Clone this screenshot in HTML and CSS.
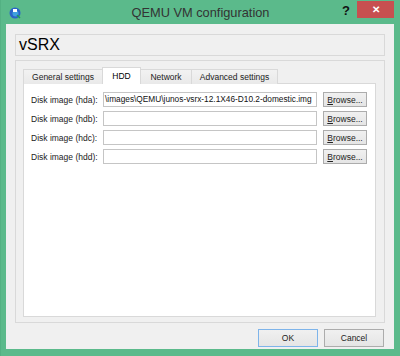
FILE: index.html
```html
<!DOCTYPE html>
<html>
<head>
<meta charset="utf-8">
<link rel="stylesheet" href="styles.css">
</head>
<body>
<div class="window">
  <div class="titlebar">
    <svg class="appicon" width="12" height="12" viewBox="0 0 12 12">
      <circle cx="6" cy="6" r="5.5" fill="#2b64c8"/>
      <circle cx="6.5" cy="6.5" r="3" fill="#3fa0e0"/>
      <rect x="4" y="2" width="4" height="3" fill="#ffffff"/>
      <path d="M8 8 L11 11" stroke="#1d9a5a" stroke-width="1.5"/>
    </svg>
    <div class="title">QEMU VM configuration</div>
    <div class="help">?</div>
    <div class="close">✕</div>
  </div>
  <div class="client">
    <div class="namebox">vSRX</div>
    <div class="group">
      <div class="tabs">
        <div class="tab t1">General settings</div>
        <div class="tab t2 active">HDD</div>
        <div class="tab t3">Network</div>
        <div class="tab t4">Advanced settings</div>
      </div>
      <div class="pane">
        <div class="row">
          <div class="label">Disk image (hda):</div>
          <div class="input filled">\images\QEMU\junos-vsrx-12.1X46-D10.2-domestic.img</div>
          <div class="btn browse"><u>B</u>rowse...</div>
        </div>
        <div class="row">
          <div class="label">Disk image (hdb):</div>
          <div class="input"></div>
          <div class="btn browse"><u>B</u>rowse...</div>
        </div>
        <div class="row">
          <div class="label">Disk image (hdc):</div>
          <div class="input"></div>
          <div class="btn browse"><u>B</u>rowse...</div>
        </div>
        <div class="row">
          <div class="label">Disk image (hdd):</div>
          <div class="input"></div>
          <div class="btn browse"><u>B</u>rowse...</div>
        </div>
      </div>
    </div>
    <div class="footer">
      <div class="btn big default">OK</div>
      <div class="btn big">Cancel</div>
    </div>
  </div>
</div>
</body>
</html>
```
FILE: styles.css
```css
html, body {
  margin: 0;
  padding: 0;
}
body {
  width: 400px;
  height: 356px;
  background: #5bba8b;
  font-family: "Liberation Sans", Arial, sans-serif;
  overflow: hidden;
}
.window {
  width: 400px;
  height: 356px;
  display: flex;
  flex-direction: column;
  box-sizing: border-box;
  border-left: 1px solid #53b183;
}
.titlebar {
  height: 24px;
  position: relative;
  display: flex;
  align-items: center;
}
.appicon {
  position: absolute;
  left: 8px;
  top: 7px;
}
.title {
  flex: 1;
  text-align: center;
  font-size: 12.8px;
  color: #333;
  padding-top: 1px;
}
.help {
  position: absolute;
  left: 341px;
  top: 3px;
  font-size: 13px;
  color: #111;
  font-weight: bold;
}
.close {
  position: absolute;
  left: 356px;
  top: 1px;
  width: 37px;
  height: 17px;
  background: #c75050;
  color: #fff;
  font-size: 10px;
  font-weight: bold;
  display: flex;
  align-items: center;
  justify-content: center;
}
.client {
  margin: 0 6px 7px 5px;
  flex: 1;
  background: #f0f0f0;
  padding: 10px 9px 0 9px;
  display: flex;
  flex-direction: column;
}
.namebox {
  height: 20px;
  border: 1px solid #d9d9d9;
  font-size: 16px;
  line-height: 20px;
  padding-left: 3px;
  color: #000;
}
.group {
  margin-top: 4px;
  height: 255px;
  border: 1px solid #d9d9d9;
  padding: 6px 8px 0 7px;
  display: flex;
  flex-direction: column;
}
.tabs {
  display: flex;
  align-items: flex-end;
  height: 17px;
  position: relative;
  z-index: 1;
}
.tab {
  box-sizing: border-box;
  height: 15px;
  border: 1px solid #d9d9d9;
  border-bottom: none;
  margin-right: -1px;
  font-size: 8.5px;
  line-height: 14px;
  color: #222;
  text-align: center;
  white-space: nowrap;
  background: linear-gradient(#f2f2f2, #e9e9e9);
}
.t1 { width: 80px; }
.t2 { width: 39px; }
.t3 { width: 52px; }
.t4 { width: 87px; }
.tab.active {
  height: 17px;
  background: #fff;
  line-height: 16px;
  color: #000;
}
.pane {
  height: 224px;
  margin-top: -1px;
  border: 1px solid #d9d9d9;
  background: #fff;
  padding: 8px 0 0 7px;
  display: flex;
  flex-direction: column;
  gap: 4px;
}
.row {
  display: flex;
  align-items: center;
  height: 15px;
}
.label {
  width: 72px;
  font-size: 8.5px;
  color: #222;
  white-space: nowrap;
}
.input {
  box-sizing: border-box;
  width: 214px;
  height: 15px;
  border: 1px solid #c5c5c5;
  background: #fff;
  overflow: hidden;
  white-space: nowrap;
  font-size: 8.3px;
  line-height: 13px;
  color: #111;
  padding-left: 1px;
}
.btn {
  box-sizing: border-box;
  border: 1px solid #acacac;
  background: linear-gradient(#f0f0f0, #e5e5e5);
  display: flex;
  align-items: center;
  justify-content: center;
  font-size: 8.5px;
  color: #222;
}
.browse {
  margin-left: 6px;
  width: 44px;
  height: 15px;
}
.footer {
  display: flex;
  justify-content: flex-end;
  gap: 6px;
  margin-top: 6px;
  padding-right: 1px;
}
.big {
  width: 60px;
  height: 18px;
}
.default {
  border-color: #7eb4ea;
}
```
